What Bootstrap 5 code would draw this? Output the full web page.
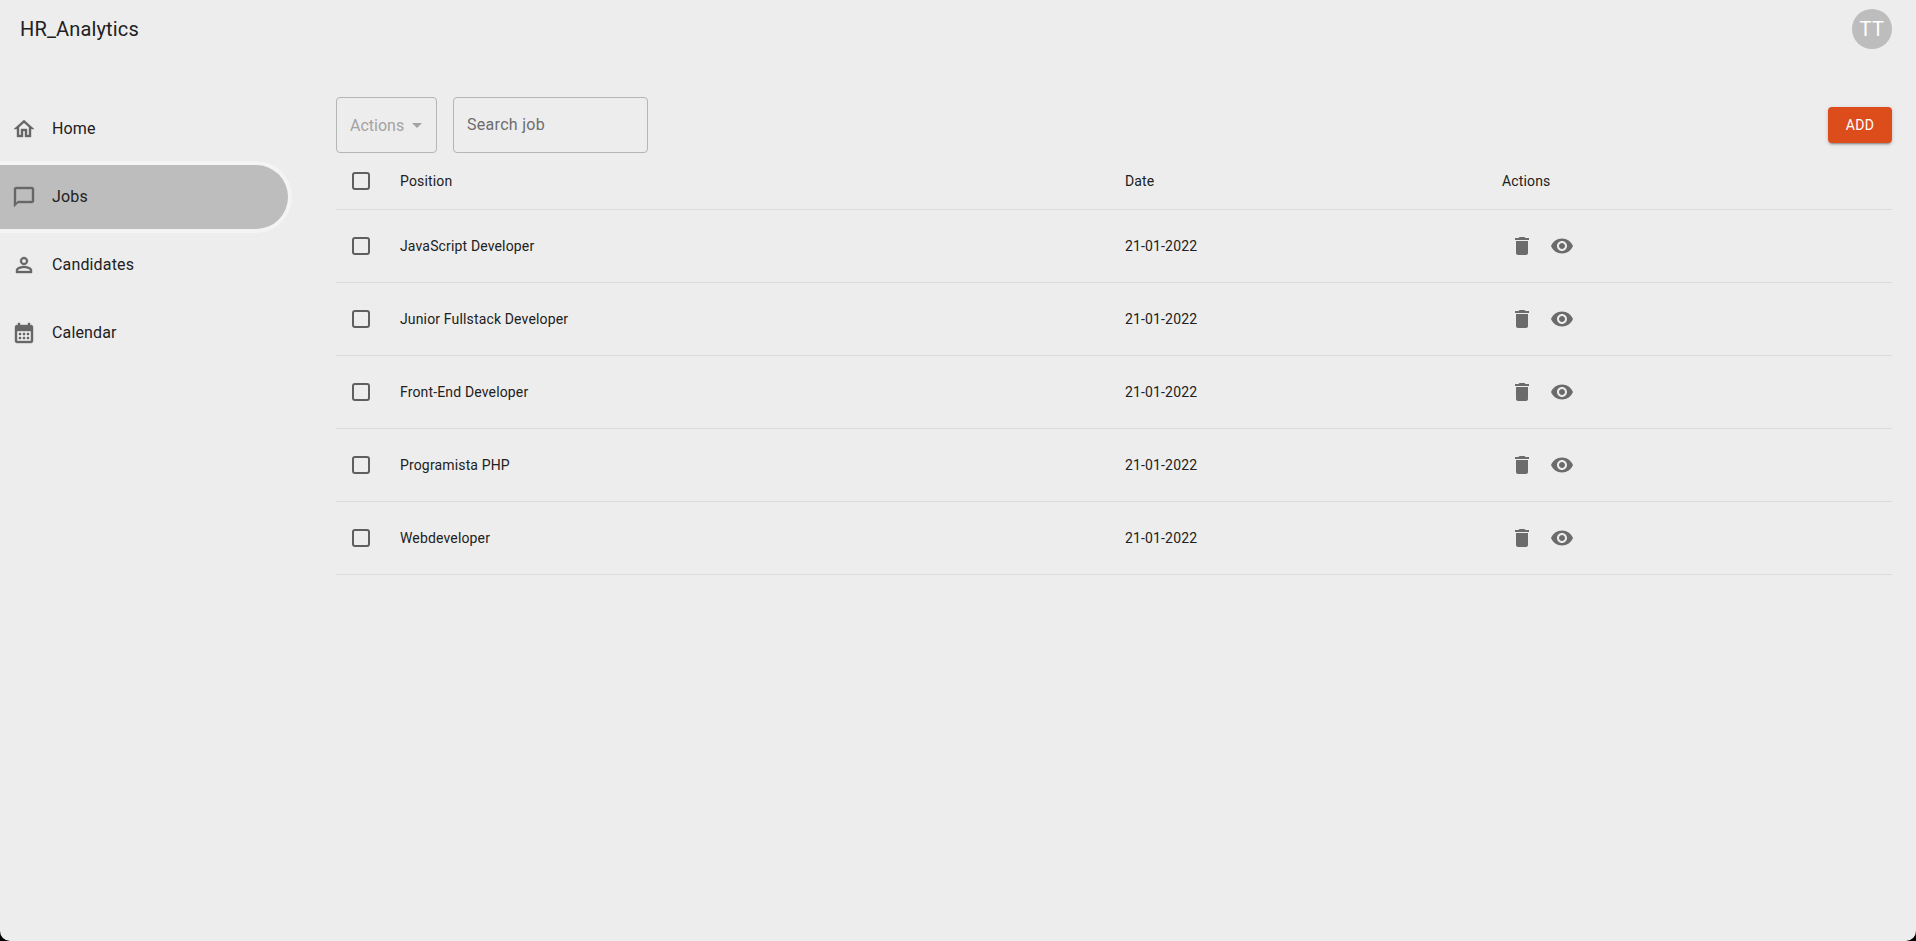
<!DOCTYPE html>
<html lang="en">
<head>
    <meta charset="UTF-8">
    <meta name="viewport" content="width=device-width, initial-scale=1">
    <title>HR_Analytics</title>
    <link href="https://cdn.jsdelivr.net/npm/bootstrap@5.3.0/dist/css/bootstrap.min.css" rel="stylesheet">
    <style>
        html, body { height: 100%; }
        body { background: #ededed; color: #212121; font-family: Roboto, "Liberation Sans", sans-serif; overflow: hidden; }
        .top-bar { height: 58px; padding: 9px 24px 0 20px; }
        .app-title { font-size: 20px; line-height: 40px; letter-spacing: .15px; color: #212121; }
        .user-circle { width: 40px; height: 40px; background: #bdbdbd; color: #fff; font-size: 20px; letter-spacing: .5px; }
        .side-menu { width: 336px; padding-top: 39px; }
        .menu-item { height: 64px; width: 288px; margin-bottom: 4px; padding-left: 12px; font-size: 16px; letter-spacing: .15px; color: #212121; text-decoration: none; border-radius: 0 32px 32px 0; }
        .menu-item svg { width: 24px; height: 24px; fill: #666; stroke: #666; stroke-width: .4; margin-right: 16px; }
        .menu-item.current { background: #bdbdbd; box-shadow: 0 0 0 4px #f4f4f4; }
        .job-area { padding: 39px 24px 0 0; }
        .tool-row { height: 56px; }
        .actions-box { width: 101px; height: 56px; border: 1px solid #b5b5b5; border-radius: 4px; padding: 1px 0 0 13px; color: #a3a3a3; font-size: 16px; }
        .actions-box i { border-left: 5px solid transparent; border-right: 5px solid transparent; border-top: 5px solid #a3a3a3; margin-left: 8px; }
        .search-box { width: 195px; height: 56px; background: transparent; border: 1px solid #b5b5b5; border-radius: 4px; padding: 0 13px 2px; font-size: 16px; letter-spacing: .3px; color: #212121; box-shadow: none; }
        .search-box::placeholder { color: #6d6d6d; opacity: 1; }
        .add-btn { background: #dd4d1c; border: 0; color: #fff; width: 64px; height: 36px; font-size: 14px; letter-spacing: .4px; border-radius: 4px; padding: 0; box-shadow: 0 3px 1px -2px rgba(0,0,0,.2), 0 2px 2px rgba(0,0,0,.14), 0 1px 5px rgba(0,0,0,.12); }
        .job-table { table-layout: fixed; font-size: 14px; letter-spacing: .15px; --bs-table-bg: transparent; --bs-table-color: #212121; margin: 0; }
        .job-table th, .job-table td { padding: 2px 16px 0; vertical-align: middle; font-weight: 400; border-bottom: 1px solid #dcdcdc; height: 73px; }
        .job-table th { height: 56px; }
        .job-table .check-col { width: 48px; padding: 0 0 0 16px; }
        .job-table .pos-col { width: 725px; }
        .job-table .date-col { width: 377px; }
        .tick-box { display: block; width: 18px; height: 18px; border: 2px solid #5f5f5f; border-radius: 3px; }
        .row-icon { width: 40px; height: 40px; padding: 8px; }
        .row-icon svg { display: block; width: 24px; height: 24px; fill: #6b6b6b; }
        .job-table .actions-cell { padding: 0 16px; }
        .win-corner { position: fixed; bottom: 0; width: 10px; height: 10px; background: #000; }
        .win-corner.left { left: 0; clip-path: path("M0 0 A10 10 0 0 0 10 10 L0 10 Z"); }
        .win-corner.right { right: 0; clip-path: path("M10 0 A10 10 0 0 1 0 10 L10 10 Z"); }
    </style>
</head>
<body>
<header class="top-bar d-flex justify-content-between">
    <div class="app-title">HR_Analytics</div>
    <div class="user-circle rounded-circle d-flex align-items-center justify-content-center">TT</div>
</header>

<div class="d-flex">
    <nav class="side-menu flex-shrink-0">
        <a href="#" class="menu-item d-flex align-items-center">
            <svg viewBox="0 0 24 24"><path d="M12 5.69l5 4.5V18h-2v-6H9v6H7v-7.81l5-4.5M12 3L2 12h3v8h6v-6h2v6h6v-8h3L12 3z"/></svg>Home
        </a>
        <a href="#" class="menu-item current d-flex align-items-center">
            <svg viewBox="0 0 24 24"><path d="M20 2H4c-1.1 0-2 .9-2 2v18l4-4h14c1.1 0 2-.9 2-2V4c0-1.1-.9-2-2-2zm0 14H6l-2 2V4h16v12z"/></svg>Jobs
        </a>
        <a href="#" class="menu-item d-flex align-items-center">
            <svg viewBox="0 0 24 24"><path d="M12 5.9c1.16 0 2.1.94 2.1 2.1s-.94 2.1-2.1 2.1S9.9 9.16 9.9 8s.94-2.1 2.1-2.1m0 9c2.97 0 6.1 1.46 6.1 2.1v1.1H5.9V17c0-.64 3.13-2.1 6.1-2.1M12 4C9.79 4 8 5.79 8 8s1.79 4 4 4 4-1.79 4-4-1.79-4-4-4zm0 9c-2.67 0-8 1.34-8 4v3h16v-3c0-2.66-5.33-4-8-4z"/></svg>Candidates
        </a>
        <a href="#" class="menu-item d-flex align-items-center">
            <svg viewBox="0 0 24 24"><path d="M19 4h-1V2h-2v2H8V2H6v2H5c-1.11 0-1.99.9-1.99 2L3 20c0 1.1.89 2 2 2h14c1.1 0 2-.9 2-2V6c0-1.1-.9-2-2-2zm0 16H5V10h14v10zM9 14H7v-2h2v2zm4 0h-2v-2h2v2zm4 0h-2v-2h2v2zm-8 4H7v-2h2v2zm4 0h-2v-2h2v2zm4 0h-2v-2h2v2z"/></svg>Calendar
        </a>
    </nav>

    <main class="job-area flex-grow-1">
        <div class="tool-row d-flex align-items-center">
            <div class="actions-box d-flex align-items-center">Actions<i></i></div>
            <input class="search-box form-control ms-3" type="text" placeholder="Search job">
            <button class="add-btn btn ms-auto" type="button">ADD</button>
        </div>
        <table class="table job-table">
            <thead>
            <tr>
                <th class="check-col"><span class="tick-box"></span></th>
                <th class="pos-col">Position</th>
                <th class="date-col">Date</th>
                <th>Actions</th>
            </tr>
            </thead>
            <tbody id="job-rows"></tbody>
        </table>
    </main>
</div>

<div class="win-corner left"></div>
<div class="win-corner right"></div>

<script src="https://cdn.jsdelivr.net/npm/bootstrap@5.3.0/dist/js/bootstrap.bundle.min.js"></script>
<script>
    const jobs = ['JavaScript Developer', 'Junior Fullstack Developer', 'Front-End Developer', 'Programista PHP', 'Webdeveloper'];
    const trash = '<svg viewBox="0 0 24 24"><path d="M6 19c0 1.1.9 2 2 2h8c1.1 0 2-.9 2-2V7H6v12zM19 4h-3.5l-1-1h-5l-1 1H5v2h14V4z"/></svg>';
    const eye = '<svg viewBox="0 0 24 24"><path d="M12 4.5C7 4.5 2.73 7.61 1 12c1.73 4.39 6 7.5 11 7.5s9.27-3.11 11-7.5c-1.73-4.39-6-7.5-11-7.5zM12 17c-2.76 0-5-2.24-5-5s2.24-5 5-5 5 2.24 5 5-2.24 5-5 5zm0-8c-1.66 0-3 1.34-3 3s1.34 3 3 3 3-1.34 3-3-1.34-3-3-3z"/></svg>';
    document.getElementById('job-rows').innerHTML = jobs.map(j => `
        <tr>
            <td class="check-col"><span class="tick-box"></span></td>
            <td>${j}</td>
            <td>21-01-2022</td>
            <td class="actions-cell"><div class="d-flex"><span class="row-icon">${trash}</span><span class="row-icon">${eye}</span></div></td>
        </tr>
    `).join('');
</script>
</body>
</html>
